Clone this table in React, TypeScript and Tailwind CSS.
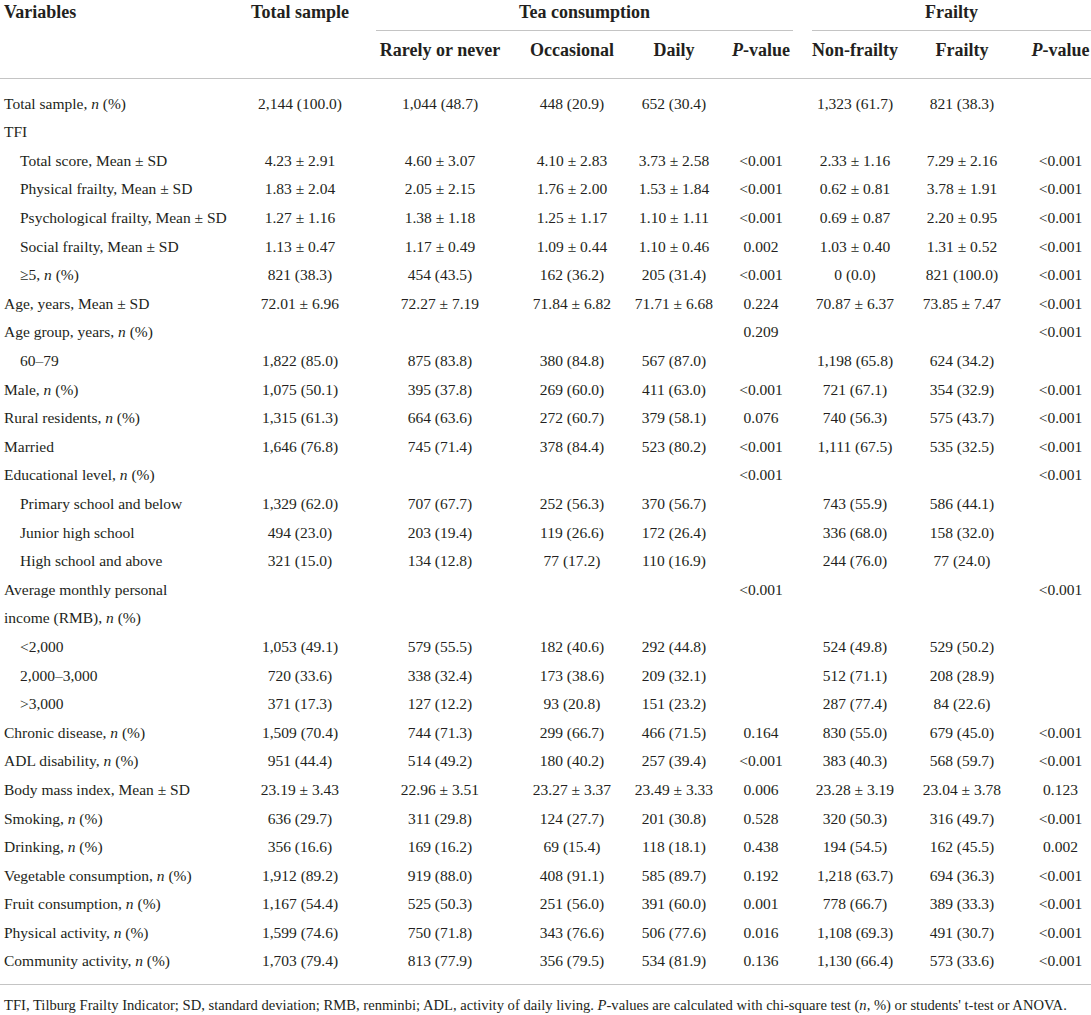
import React from 'react';

// one row of the table: label, indent flag, then 8 value cells
type Row = { label: React.ReactNode; sub?: boolean; v: string[] };

const N = () => <i>n</i>;

const rows: Row[] = [
  { label: <>Total sample, <N /> (%)</>, v: ['2,144 (100.0)', '1,044 (48.7)', '448 (20.9)', '652 (30.4)', '', '1,323 (61.7)', '821 (38.3)', ''] },
  { label: 'TFI', v: ['', '', '', '', '', '', '', ''] },
  { label: 'Total score, Mean ± SD', sub: true, v: ['4.23 ± 2.91', '4.60 ± 3.07', '4.10 ± 2.83', '3.73 ± 2.58', '<0.001', '2.33 ± 1.16', '7.29 ± 2.16', '<0.001'] },
  { label: 'Physical frailty, Mean ± SD', sub: true, v: ['1.83 ± 2.04', '2.05 ± 2.15', '1.76 ± 2.00', '1.53 ± 1.84', '<0.001', '0.62 ± 0.81', '3.78 ± 1.91', '<0.001'] },
  { label: 'Psychological frailty, Mean ± SD', sub: true, v: ['1.27 ± 1.16', '1.38 ± 1.18', '1.25 ± 1.17', '1.10 ± 1.11', '<0.001', '0.69 ± 0.87', '2.20 ± 0.95', '<0.001'] },
  { label: 'Social frailty, Mean ± SD', sub: true, v: ['1.13 ± 0.47', '1.17 ± 0.49', '1.09 ± 0.44', '1.10 ± 0.46', '0.002', '1.03 ± 0.40', '1.31 ± 0.52', '<0.001'] },
  { label: <>≥5, <N /> (%)</>, sub: true, v: ['821 (38.3)', '454 (43.5)', '162 (36.2)', '205 (31.4)', '<0.001', '0 (0.0)', '821 (100.0)', '<0.001'] },
  { label: 'Age, years, Mean ± SD', v: ['72.01 ± 6.96', '72.27 ± 7.19', '71.84 ± 6.82', '71.71 ± 6.68', '0.224', '70.87 ± 6.37', '73.85 ± 7.47', '<0.001'] },
  { label: <>Age group, years, <N /> (%)</>, v: ['', '', '', '', '0.209', '', '', '<0.001'] },
  { label: '60–79', sub: true, v: ['1,822 (85.0)', '875 (83.8)', '380 (84.8)', '567 (87.0)', '', '1,198 (65.8)', '624 (34.2)', ''] },
  { label: <>Male, <N /> (%)</>, v: ['1,075 (50.1)', '395 (37.8)', '269 (60.0)', '411 (63.0)', '<0.001', '721 (67.1)', '354 (32.9)', '<0.001'] },
  { label: <>Rural residents, <N /> (%)</>, v: ['1,315 (61.3)', '664 (63.6)', '272 (60.7)', '379 (58.1)', '0.076', '740 (56.3)', '575 (43.7)', '<0.001'] },
  { label: 'Married', v: ['1,646 (76.8)', '745 (71.4)', '378 (84.4)', '523 (80.2)', '<0.001', '1,111 (67.5)', '535 (32.5)', '<0.001'] },
  { label: <>Educational level, <N /> (%)</>, v: ['', '', '', '', '<0.001', '', '', '<0.001'] },
  { label: 'Primary school and below', sub: true, v: ['1,329 (62.0)', '707 (67.7)', '252 (56.3)', '370 (56.7)', '', '743 (55.9)', '586 (44.1)', ''] },
  { label: 'Junior high school', sub: true, v: ['494 (23.0)', '203 (19.4)', '119 (26.6)', '172 (26.4)', '', '336 (68.0)', '158 (32.0)', ''] },
  { label: 'High school and above', sub: true, v: ['321 (15.0)', '134 (12.8)', '77 (17.2)', '110 (16.9)', '', '244 (76.0)', '77 (24.0)', ''] },
  { label: 'Average monthly personal', v: ['', '', '', '', '<0.001', '', '', '<0.001'] },
  { label: <>income (RMB), <N /> (%)</>, v: ['', '', '', '', '', '', '', ''] },
  { label: '<2,000', sub: true, v: ['1,053 (49.1)', '579 (55.5)', '182 (40.6)', '292 (44.8)', '', '524 (49.8)', '529 (50.2)', ''] },
  { label: '2,000–3,000', sub: true, v: ['720 (33.6)', '338 (32.4)', '173 (38.6)', '209 (32.1)', '', '512 (71.1)', '208 (28.9)', ''] },
  { label: '>3,000', sub: true, v: ['371 (17.3)', '127 (12.2)', '93 (20.8)', '151 (23.2)', '', '287 (77.4)', '84 (22.6)', ''] },
  { label: <>Chronic disease, <N /> (%)</>, v: ['1,509 (70.4)', '744 (71.3)', '299 (66.7)', '466 (71.5)', '0.164', '830 (55.0)', '679 (45.0)', '<0.001'] },
  { label: <>ADL disability, <N /> (%)</>, v: ['951 (44.4)', '514 (49.2)', '180 (40.2)', '257 (39.4)', '<0.001', '383 (40.3)', '568 (59.7)', '<0.001'] },
  { label: 'Body mass index, Mean ± SD', v: ['23.19 ± 3.43', '22.96 ± 3.51', '23.27 ± 3.37', '23.49 ± 3.33', '0.006', '23.28 ± 3.19', '23.04 ± 3.78', '0.123'] },
  { label: <>Smoking, <N /> (%)</>, v: ['636 (29.7)', '311 (29.8)', '124 (27.7)', '201 (30.8)', '0.528', '320 (50.3)', '316 (49.7)', '<0.001'] },
  { label: <>Drinking, <N /> (%)</>, v: ['356 (16.6)', '169 (16.2)', '69 (15.4)', '118 (18.1)', '0.438', '194 (54.5)', '162 (45.5)', '0.002'] },
  { label: <>Vegetable consumption, <N /> (%)</>, v: ['1,912 (89.2)', '919 (88.0)', '408 (91.1)', '585 (89.7)', '0.192', '1,218 (63.7)', '694 (36.3)', '<0.001'] },
  { label: <>Fruit consumption, <N /> (%)</>, v: ['1,167 (54.4)', '525 (50.3)', '251 (56.0)', '391 (60.0)', '0.001', '778 (66.7)', '389 (33.3)', '<0.001'] },
  { label: <>Physical activity, <N /> (%)</>, v: ['1,599 (74.6)', '750 (71.8)', '343 (76.6)', '506 (77.6)', '0.016', '1,108 (69.3)', '491 (30.7)', '<0.001'] },
  { label: <>Community activity, <N /> (%)</>, v: ['1,703 (79.4)', '813 (77.9)', '356 (79.5)', '534 (81.9)', '0.136', '1,130 (66.4)', '573 (33.6)', '<0.001'] },
];

const grid = 'grid grid-cols-[240px_120px_160px_104px_100px_74px_114px_100px_79px]';

function Cell({ children, last }: { children?: React.ReactNode; last?: boolean }) {
  return (
    <div className={`flex items-center justify-center whitespace-nowrap ${last ? 'pl-[18px]' : ''}`}>
      <span>{children}</span>
    </div>
  );
}

const PVal = () => (
  <span><i>P</i>-value</span>
);

export default function App() {
  return (
    <div
      className="w-[1091px] h-[1015px] bg-white text-[#231f20] overflow-hidden"
      style={{ fontFamily: '"Liberation Serif", "Times New Roman", serif' }}
    >
      {/* header row 1 */}
      <div className={`${grid} h-[31px] text-[18px] font-bold`}>
        <div className="pl-[4px] leading-[25px] whitespace-nowrap">Variables</div>
        <div className="flex justify-center leading-[25px] whitespace-nowrap">Total sample</div>
        <div className="col-span-4 ml-[16px] mr-[5px] border-b border-[#c4c4c4] flex justify-center leading-[25px]">Tea consumption</div>
        <div className="col-span-3 ml-[14px] border-b border-[#c4c4c4] flex justify-center leading-[25px]">Frailty</div>
      </div>

      {/* header row 2 */}
      <div className={`${grid} h-[48px] text-[18px] font-bold border-b border-[#c4c4c4] pt-[6px] leading-[26px]`}>
        <div />
        <div />
        <div className="flex justify-center whitespace-nowrap">Rarely or never</div>
        <div className="flex justify-center whitespace-nowrap">Occasional</div>
        <div className="flex justify-center whitespace-nowrap">Daily</div>
        <div className="flex justify-center whitespace-nowrap"><PVal /></div>
        <div className="flex justify-center whitespace-nowrap">Non-frailty</div>
        <div className="flex justify-center whitespace-nowrap">Frailty</div>
        <div className="flex justify-center whitespace-nowrap pl-[18px]"><PVal /></div>
      </div>

      {/* body */}
      <div className="pt-[10px] pb-[9px] border-b border-[#c4c4c4] text-[15.5px]">
        {rows.map((r, i) => (
          <div key={i} className={`${grid} h-[28.6px]`}>
            <div className={`flex items-center whitespace-nowrap ${r.sub ? 'pl-[20px]' : 'pl-[4px]'}`}>
              <span>{r.label}</span>
            </div>
            {r.v.map((v, j) => (
              <Cell key={j} last={j === 7}>{v}</Cell>
            ))}
          </div>
        ))}
      </div>

      {/* footnote */}
      <div className="pl-[4px] pt-[10px] text-[14.6px] leading-[20px] whitespace-nowrap">
        TFI, Tilburg Frailty Indicator; SD, standard deviation; RMB, renminbi; ADL, activity of daily living. <i>P</i>-values are calculated with chi-square test (<i>n</i>, %) or students' t-test or ANOVA.
      </div>
    </div>
  );
}
